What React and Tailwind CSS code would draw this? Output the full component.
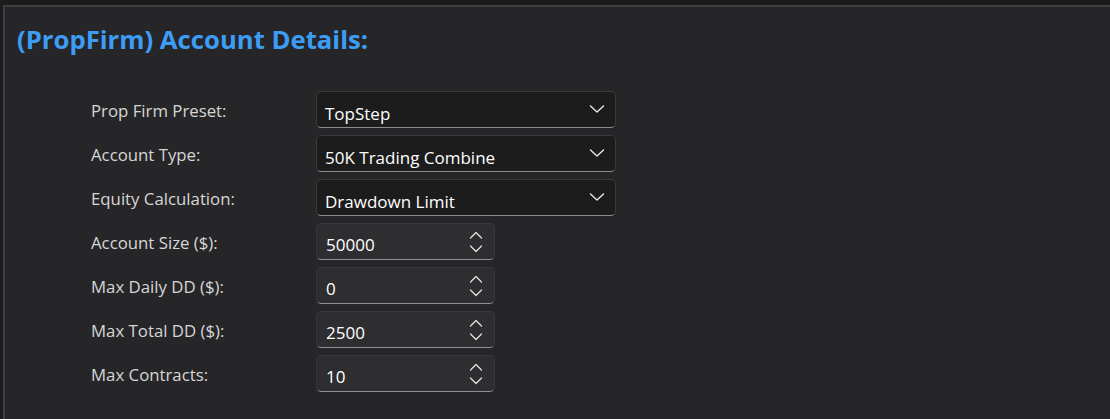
import React from 'react';

const Chevron = () => (
  <svg width="16" height="10" viewBox="0 0 16 10" fill="none" stroke="#e8e8e8" strokeWidth="1.4" strokeLinecap="round" strokeLinejoin="round">
    <polyline points="1.5 2 8 8 14.5 2" />
  </svg>
);

const Spinner = () => (
  <div className="flex flex-col items-center gap-[6px]">
    <svg width="14" height="8" viewBox="0 0 14 8" fill="none" stroke="#e0e0e0" strokeWidth="1.3" strokeLinecap="round" strokeLinejoin="round">
      <polyline points="1.5 7 7 1.5 12.5 7" />
    </svg>
    <svg width="14" height="8" viewBox="0 0 14 8" fill="none" stroke="#e0e0e0" strokeWidth="1.3" strokeLinecap="round" strokeLinejoin="round">
      <polyline points="1.5 1 7 6.5 12.5 1" />
    </svg>
  </div>
);

const Select = ({ value }) => (
  <div className="w-[300px] h-[37px] rounded-[5px] border border-[#3a3a3c] border-b-[#8e8e90] bg-[#1c1c1c] flex items-center justify-between pl-[8px] pr-[10px]">
    <span className="text-[17px] text-white pt-[8px]">{value}</span>
    <span className="pb-[2px]"><Chevron /></span>
  </div>
);

const NumberBox = ({ value }) => (
  <div className="w-[179px] h-[37px] rounded-[5px] border border-[#38383a] border-b-[#8e8e90] bg-[#2e2e30] flex items-center justify-between pl-[9px] pr-[11px]">
    <span className="text-[17px] text-white pt-[6px]">{value}</span>
    <Spinner />
  </div>
);

const rows = [
  { label: 'Prop Firm Preset:', type: 'select', value: 'TopStep' },
  { label: 'Account Type:', type: 'select', value: '50K Trading Combine' },
  { label: 'Equity Calculation:', type: 'select', value: 'Drawdown Limit' },
  { label: 'Account Size ($):', type: 'number', value: '50000' },
  { label: 'Max Daily DD ($):', type: 'number', value: '0' },
  { label: 'Max Total DD ($):', type: 'number', value: '2500' },
  { label: 'Max Contracts:', type: 'number', value: '10' },
];

export default function App() {
  return (
    <div className="w-[1110px] h-[419px] bg-[#1c1c1c] pt-[5px] overflow-hidden" style={{ fontFamily: '"Open Sans", "Noto Sans", sans-serif' }}>
      <div className="h-full ml-[3px] border-t-2 border-l-2 border-[#3e3e44] bg-[#262628]">
        <h2 className="pl-[12px] pt-[17px] text-[25.7px] font-bold text-[#3d9df5] leading-[32px]">
          (PropFirm) Account Details:
        </h2>
        <div className="mt-[35px] pl-[86px] flex flex-col gap-[7px]">
          {rows.map((row, i) => (
            <div key={i} className="flex items-center">
              <div className="w-[225px] text-[16.8px] text-[#d6d6d6] pt-[3px]">{row.label}</div>
              {row.type === 'select' ? <Select value={row.value} /> : <NumberBox value={row.value} />}
            </div>
          ))}
        </div>
      </div>
    </div>
  );
}
